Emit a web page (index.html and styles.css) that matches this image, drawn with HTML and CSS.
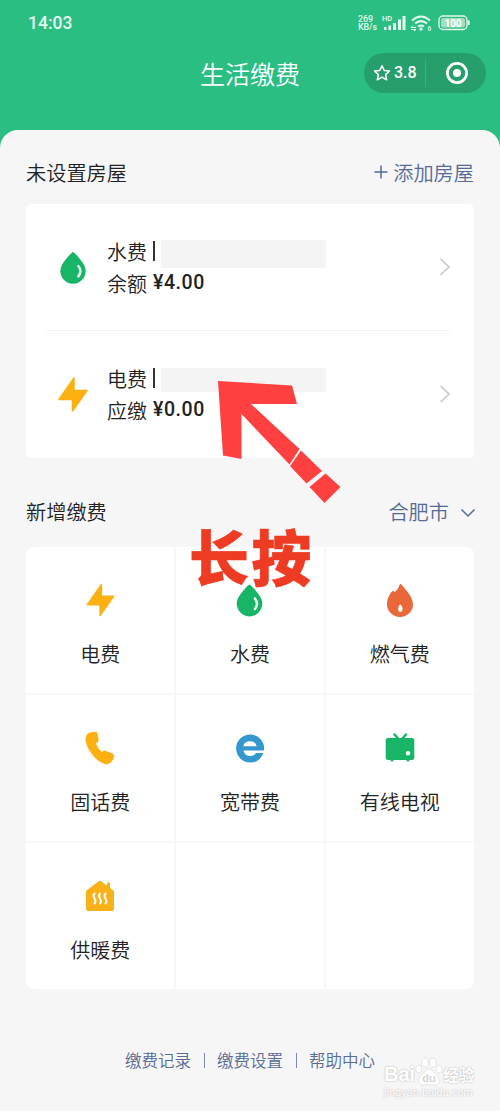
FILE: index.html
```html
<!DOCTYPE html>
<html lang="zh-CN">
<head>
<meta charset="utf-8">
<title>生活缴费</title>
<link rel="stylesheet" href="styles.css">
</head>
<body>
<svg class="defs" width="0" height="0" aria-hidden="true">
  <symbol id="drop" viewBox="0 0 26 32"><path d="M13 1C14.400 1 22 10 24 14A12.300 12.300 0 1 1 2 14C4 10 11.600 1 13 1Z" fill="#18b566"/><path d="M18.200 14.500Q22.300 19.500 18.200 24.600" fill="none" stroke="#e8faef" stroke-width="2.400" stroke-linecap="round"/></symbol>
  <symbol id="bolt" viewBox="0 0 32 36"><path d="M17 1.500V14H30L15.500 34.500V23H2Z" fill="#fcb012" stroke="#fcb012" stroke-width="1.500" stroke-linejoin="round"/></symbol>
</svg>
<div class="screen">
  <header class="header">
    <div class="status">
      <span class="clock">14:03</span>
      <div class="indicators">
        <span class="speed"><b>269</b><b>KB/s</b></span>
        <svg width="24" height="18" viewBox="0 0 24 18" fill="#e4f9ef"><text class="hd" x="0" y="6.500">HD</text><path d="M2 13h2.500v3H2zM6.500 11.500H9V16H6.500zM11 9h3v7h-3zM16 5.500h3V16h-3zM20.500 2h3v14h-3z"/></svg>
        <svg class="wifi" width="24" height="18" viewBox="0 0 24 18"><path d="M2 6.500Q11 -1.500 20 6.500M5 9.600Q11 4.600 17 9.600M8 12.500Q11 10.300 14 12.500" fill="none" stroke="#e4f9ef" stroke-width="2"/><circle cx="11" cy="15" r="1.700" fill="#e4f9ef"/><path d="M1 13.500h5M3 11.500l-2 2M1 15.500h5l-2 1.500" fill="none" stroke="#e4f9ef"/><text class="wifi-gen" x="17.500" y="16.500">6</text></svg>
        <svg class="battery" width="33" height="16" viewBox="0 0 33 16"><rect x="1" y="1" width="28" height="13.500" rx="4" fill="none" stroke="#e4f8ed" stroke-width="1.400"/><rect x="3" y="3" width="24" height="9.500" rx="2" fill="#a1dfbf"/><path d="M30.700 5.500v4.500" stroke="#e4f8ed" stroke-width="2"/><text x="15" y="11.500" text-anchor="middle">100</text></svg>
      </div>
    </div>
    <div class="navbar">
      <h1 class="title">生活缴费</h1>
      <div class="capsule">
        <svg width="18" height="18" viewBox="0 0 18 18"><path d="M9 1.700L11.200 6.400L16.500 7L12.600 10.600L13.700 15.800L9 13.200L4.300 15.800L5.400 10.600L1.500 7L6.800 6.400Z" fill="none" stroke="#fff" stroke-width="1.500" stroke-linejoin="round"/></svg>
        <span class="score">3.8</span><i class="capsule-line"></i>
        <svg class="target" width="24" height="24" viewBox="0 0 24 24"><circle cx="12" cy="12" r="9.600" fill="none" stroke="#fff" stroke-width="2.700"/><circle cx="12" cy="12" r="4" fill="#fff"/></svg>
      </div>
    </div>
  </header>
  <main class="sheet">
    <div class="heading house"><h2>未设置房屋</h2><a class="add"><svg width="14" height="14" viewBox="0 0 14 14"><path d="M7 .500v13M.500 7h13" stroke="#576b95" stroke-width="1.500"/></svg>添加房屋</a></div>
    <section class="bills">
      <article class="bill">
        <svg class="bill-icon" width="28" height="33"><use href="#drop"/></svg>
        <div class="bill-info"><p class="bill-name">水费<i class="bar"></i><span class="mask"></span></p><p class="bill-amount">余额<b>¥4.00</b></p></div>
        <svg width="12" height="20" viewBox="0 0 12 20"><path d="M1.500 2L10 10L1.500 18" fill="none" stroke="#c9c9c9" stroke-width="1.700"/></svg>
      </article>
      <hr class="divider">
      <article class="bill">
        <svg class="bill-icon wide" width="32" height="37"><use href="#bolt"/></svg>
        <div class="bill-info"><p class="bill-name">电费<i class="bar"></i><span class="mask short"></span></p><p class="bill-amount">应缴<b>¥0.00</b></p></div>
        <svg width="12" height="20" viewBox="0 0 12 20"><path d="M1.500 2L10 10L1.500 18" fill="none" stroke="#c9c9c9" stroke-width="1.700"/></svg>
      </article>
    </section>
    <div class="heading new"><h2>新增缴费</h2><a class="city">合肥市<svg width="16" height="10" viewBox="0 0 16 10"><path d="M1.500 1.500L8 8L14.500 1.500" fill="none" stroke="#576b95" stroke-width="1.500"/></svg></a></div>
    <section class="services">
      <div class="service"><svg width="31" height="36"><use href="#bolt"/></svg><span>电费</span></div>
      <div class="service"><svg width="27" height="33"><use href="#drop"/></svg><span>水费</span></div>
      <div class="service"><svg width="28" height="34" viewBox="0 0 28 34"><path d="M15.500 1.500C18 5 27 13 27 21.500A13 12.500 0 0 1 1 21.500C1 15.500 3.500 11 6.500 8Q7.500 7.500 8.500 9Q12 7 13.500 2Q14.500 .500 15.500 1.500Z" fill="#e96739"/><path d="M14.300 21.500C15.500 21.500 16.500 24 16.500 26Q16.500 29 14.300 29T12.200 26C12.200 24 13.100 21.500 14.300 21.500Z" fill="#fff"/></svg><span>燃气费</span></div>
      <div class="service"><svg width="30" height="34" viewBox="0 0 30 34"><path d="M6 1.200L10.500 .800Q12.500 .800 12.700 2.800L13.600 9Q13.800 10.800 12.300 11.500L10.800 12.300Q12.500 17.500 16.800 21L18.300 20Q19.500 19.300 21 20L27.500 22.500Q29.600 23.500 29.100 25.500C28 31 24 34 19.500 33C10 29.500 .700 17 .500 8Q.800 2 6 1.200Z" fill="#fcb012"/></svg><span>固话费</span></div>
      <div class="service"><svg width="28" height="34" viewBox="0 0 28 34"><path fill="#3498cf" fill-rule="evenodd" d="M28 19.500H7.200Q9 25 14.500 25Q18 25 20 22H27.200Q24 31.500 14.500 31.500A14 14 0 1 1 28 19.500ZM7.300 15.300H20.700Q19.500 10.300 14 10.300T7.300 15.300Z"/></svg><span>宽带费</span></div>
      <div class="service"><svg width="30" height="34" viewBox="0 0 30 34"><path d="M9.500 3.500L14 8.500M21 3.500L16.500 8.500" stroke="#18b566" stroke-width="2.500" stroke-linecap="round"/><path d="M7 27v3.500M23 27v3.500" stroke="#18b566" stroke-width="2.500"/><rect x=".700" y="7" width="28.600" height="22" rx="2.500" fill="#18b566"/><circle cx="23" cy="22.300" r="2.200" fill="#fff"/></svg><span>有线电视</span></div>
      <div class="service"><svg width="28" height="34" viewBox="0 0 28 34"><path d="M0 12L13 2Q14 1.500 15 2L21 6.700V4.500Q22.500 2 24 4.500V9L28 12V30Q28 32 26 32H2Q0 32 0 30Z" fill="#f8b218"/><path d="M8.500 14.500q-2 2.200 0 5t0 5M14 14.500q-2 2.200 0 5t0 5M19.500 14.500q-2 2.200 0 5t0 5" fill="none" stroke="#fff" stroke-width="2" stroke-linecap="round"/></svg><span>供暖费</span></div>
      <div class="service"></div>
      <div class="service"></div>
    </section>
    <footer class="links"><a>缴费记录</a><i></i><a>缴费设置</a><i></i><a>帮助中心</a></footer>
  </main>
  <svg class="arrow" width="124" height="124" viewBox="0 0 124 124" fill="#ff4040"><path d="M0 0L74 4.500L79 23H33L81.500 68L71.500 83.500L23.500 33V78L5 74.500Z"/><path d="M83 69.500L104 90L88.500 102.500L72 85Z"/><path d="M107.500 92.500L122.500 106L106.500 122L91.500 106Z"/></svg>
  <strong class="hint">长按</strong>
  <div class="watermark">
    <div class="brand"><span>Bai</span><span class="paw"><svg width="28" height="29" viewBox="0 0 28 29"><g fill="#fff" stroke="#dedede" stroke-width=".800"><ellipse cx="3.800" cy="12" rx="3" ry="4"/><ellipse cx="10" cy="5.500" rx="3.200" ry="4.500"/><ellipse cx="18" cy="5.500" rx="3.200" ry="4.500"/><ellipse cx="24" cy="12" rx="3" ry="4"/><path d="M14 12Q17 12 19.500 16Q25 20 25 24Q24 29 18 28H10Q4 29 3 24Q3 20 8.500 16Q11 12 14 12Z"/></g><text x="14" y="25" text-anchor="middle">du</text></svg></span><span class="exp">经验</span></div>
    <div class="domain">jingyan.baidu.com</div>
  </div>
</div>
</body>
</html>
```
FILE: styles.css
```css
* { box-sizing: border-box; }
body { margin: 0; font-family: "Noto Sans CJK SC", sans-serif; font-weight: 350; color: #222; }
h1, h2, p { margin: 0; font-weight: 350; }
svg { display: block; flex: none; }
.defs { position: absolute; }
.screen { position: relative; width: 500px; height: 1111px; overflow: hidden; background: #2abe83; }
.header { height: 130px; color: #fff; }
.status { display: flex; align-items: center; justify-content: space-between; height: 46px; padding: 0 29px 0 28px; }
.clock { font: 500 17.500px/22px Roboto, sans-serif; color: #e4f9ef; }
.indicators { display: flex; align-items: center; height: 24px; color: #e4f9ef; }
.speed { display: flex; flex-direction: column; width: 24px; font: 500 8.800px/8.500px Roboto, sans-serif; white-space: nowrap; }
.speed b { font-weight: 500; }
.hd { font: 500 7.500px Roboto, sans-serif; }
.wifi { margin-left: 4px; }
.wifi-gen { font: 500 6.500px Roboto, sans-serif; fill: #e4f9ef; }
.battery { margin-left: 4px; }
.battery text { font: 700 10px Roboto, sans-serif; fill: #fff; }
.navbar { display: grid; grid-template-columns: 1fr auto 1fr; align-items: center; height: 53px; padding-right: 14px; padding-left: 14px; }
.title { grid-column: 2; font-size: 25px; line-height: 36px; }
.capsule { justify-self: end; display: flex; align-items: center; width: 122px; height: 40px; padding-left: 9px; border-radius: 20px; background: #269f6c; }
.score { width: 26px; margin-left: 3px; font: 500 16px/20px Roboto, sans-serif; }
.capsule-line { width: 1px; height: 28px; margin-left: 5px; background: #46aa7d; }
.target { margin-left: 19px; }
.sheet { height: 981px; padding: 0 26px; border-radius: 18px 18px 0 0; background: #f6f6f6; }
.heading { display: flex; align-items: center; justify-content: space-between; }
.heading h2 { font-size: 20.200px; line-height: 30px; }
.house { height: 74px; padding-top: 11px; }
.add, .city { display: flex; align-items: center; font-size: 20.200px; line-height: 30px; color: #576b95; }
.add { padding-top: 1px; }
.add svg { margin: -3px 5px 0 0; }
.city svg { margin: 3px 0 0 11px; }
.city { margin-right: -2px; }
.bills { height: 254px; border-radius: 6px; background: #fff; }
.bill { display: flex; align-items: center; height: 126px; padding: 0 23px 0 31px; }
.divider { height: 1px; margin: 0 24px 0 20px; border: 0; background: #f3f3f3; }
.bill-icon { margin-left: 2px; }
.bill-icon + .bill-info { margin-left: 20px; }
.bill-icon.wide { margin-left: 0; }
.bill-icon.wide + .bill-info { margin-left: 18px; }
.bill-info { flex: 1; padding-top: 2px; }
.bill-name, .bill-amount { display: flex; align-items: center; height: 32px; font-size: 20px; line-height: 30px; }
.bar { width: 2px; height: 20px; margin: -3px 0 0 6px; background: #333; }
.mask { width: 165px; height: 28px; margin: 3px 0 0 6px; background: #f4f4f4; }
.mask.short { height: 24px; margin-top: 1px; }
.bill-amount b { margin: -3px 0 0 6px; font: 500 19.500px/30px Roboto, sans-serif; letter-spacing: .55px; }
.new { height: 89px; padding-top: 18px; }
.services { display: grid; grid-template-columns: repeat(3, 1fr); grid-template-rows: repeat(3, 1fr); gap: 1.500px; height: 442px; overflow: hidden; border-radius: 8px; background: #f7f7f7; }
.service { display: flex; flex-direction: column; align-items: center; padding-top: 36px; background: #fff; }
.service svg { height: 34px; }
.service span { margin-top: 22px; font-size: 20px; line-height: 30px; }
.links { display: flex; align-items: center; justify-content: center; height: 30px; margin-top: 56px; font-size: 16.500px; line-height: 30px; color: #576b95; }
.links i { width: 1px; height: 15px; margin: 0 12.500px; background: #7c8baa; }
.arrow { position: absolute; left: 218px; top: 381px; }
.hint { position: absolute; left: 189px; top: 511px; font-size: 60px; line-height: 88px; font-weight: 900; letter-spacing: 2.500px; color: #ee3b24; -webkit-text-stroke: .5px #ee3b24; }
.watermark { position: absolute; left: 384px; top: 1056px; width: 92px; color: #fff; }
.brand { display: flex; align-items: flex-end; height: 30px; font: 700 20px/24px "Liberation Sans", sans-serif; text-shadow: 0 0 2px #aaa; }
.paw text { font: 700 11px "Liberation Sans", sans-serif; fill: #d5d5d5; text-shadow: none; }
.exp { font: 700 15.500px/24px "Noto Sans CJK SC", sans-serif; }
.domain { font: 11px/12px "Liberation Sans", sans-serif; text-shadow: 0 0 2px #aaa; }
```
